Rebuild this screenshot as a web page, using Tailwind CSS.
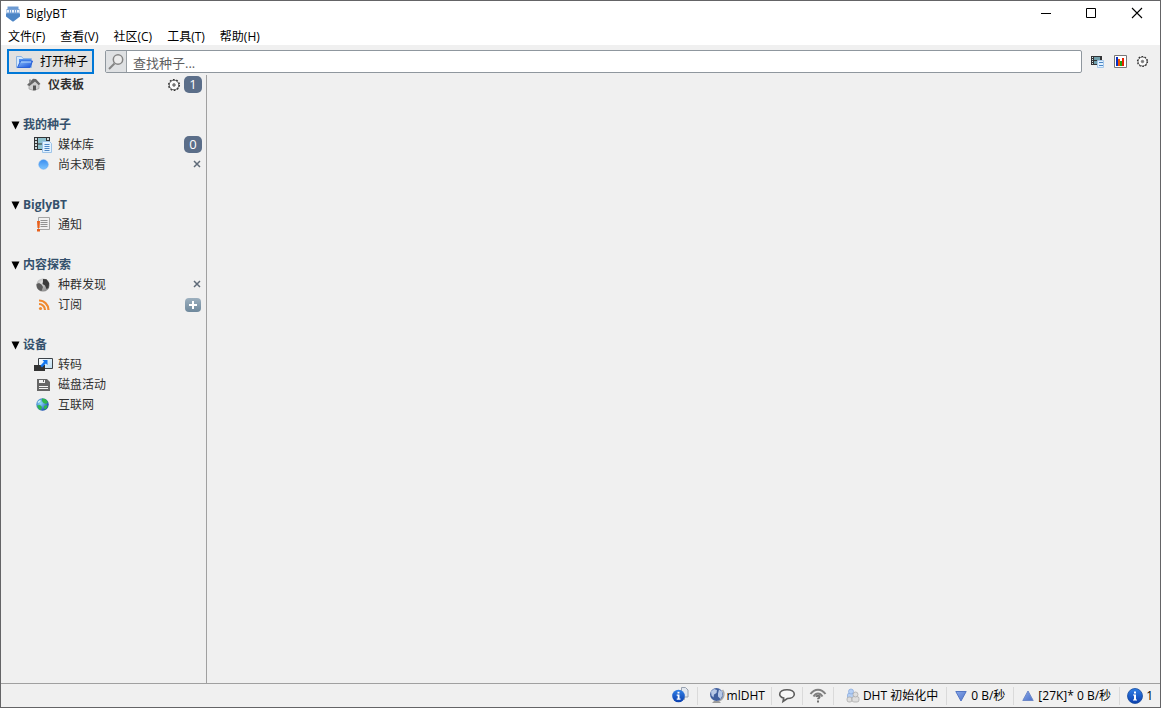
<!DOCTYPE html>
<html lang="zh-CN">

<head>
    <meta charset="UTF-8">
    <meta name="viewport" content="width=device-width, initial-scale=1.0">
    <title>BiglyBT</title>
    <script src="https://cdn.jsdelivr.net/npm/@tailwindcss/browser@4"></script>
    <style>
        body {
            font-family: "Open Sans", "Noto Sans CJK SC", sans-serif;
        }
    </style>
</head>

<body class="h-screen flex flex-col overflow-hidden border border-[#646466] bg-[#f0f0f0] text-xs text-black">

    <!-- Shared icons -->
    <svg class="absolute w-0 h-0" aria-hidden="true">
        <defs>
            <linearGradient id="blueBall" x1="0" y1="0" x2="0" y2="1">
                <stop offset="0" stop-color="#2f7fe6" />
                <stop offset="1" stop-color="#0b3fae" />
            </linearGradient>
            <linearGradient id="dotFill" x1="0" y1="0" x2="0" y2="1">
                <stop offset="0" stop-color="#3a8ef0" />
                <stop offset="1" stop-color="#7cc4ff" />
            </linearGradient>
            <linearGradient id="screenFill" x1="0" y1="0" x2="1" y2="1">
                <stop offset="0" stop-color="#ffffff" />
                <stop offset="1" stop-color="#b9dcf2" />
            </linearGradient>
            <linearGradient id="folderFill" x1="0" y1="0" x2="1" y2="1">
                <stop offset="0" stop-color="#8cc0fa" />
                <stop offset="1" stop-color="#1550dc" />
            </linearGradient>
            <linearGradient id="plusFill" x1="0" y1="0" x2="0" y2="1">
                <stop offset="0" stop-color="#9db0bf" />
                <stop offset="1" stop-color="#6e889c" />
            </linearGradient>
            <radialGradient id="greyBall" cx="0.4" cy="0.3" r="0.7">
                <stop offset="0" stop-color="#e4e4e4" />
                <stop offset="1" stop-color="#8c8c8c" />
            </radialGradient>
            <radialGradient id="seaBall" cx="0.35" cy="0.4" r="0.65">
                <stop offset="0" stop-color="#8cdcfa" />
                <stop offset="1" stop-color="#1b4fae" />
            </radialGradient>
            <linearGradient id="arrowFill" x1="0" y1="0" x2="1" y2="1">
                <stop offset="0" stop-color="#8aa9ea" />
                <stop offset="1" stop-color="#4a70c8" />
            </linearGradient>
            <symbol id="gear" viewBox="0 0 14 14">
                <circle cx="7" cy="7" r="4.8" fill="#fbfbfb" stroke="#555" stroke-width=".9" />
                <circle cx="7" cy="7" r="5.4" fill="none" stroke="#333" stroke-width="1.3" stroke-dasharray="1.7 1.69" />
                <circle cx="7" cy="7" r="1.4" fill="#777" stroke="#666" stroke-width=".6" />
            </symbol>
            <symbol id="library" viewBox="0 0 20 18">
                <path d="M1 1h16v13H1z" fill="#323436" />
                <path d="M5 2h8v5.500H5zM5 8.500h8V13H5z" fill="#8fc3cf" />
                <path d="M2 2h2v2H2zM2 5h2v2H2zM2 8h2v2H2zM2 11h2v2H2zM14 2h2v2h-2z" fill="#cfd8da" />
                <path d="M9.500 5.500h7l2 2v9h-9z" fill="#e3f2ff" stroke="#9fc4e8" />
                <path d="M11.500 8.500h5M11.500 10.500h5M11.500 12.500h5M11.500 14.500h5" stroke="#4d86c4" />
            </symbol>
            <symbol id="close" viewBox="0 0 8 8">
                <path d="M1 1l6 6M7 1L1 7" stroke="#5f6b78" stroke-width="1.500" />
            </symbol>
        </defs>
    </svg>

    <!-- Title bar -->
    <header class="h-[26px] shrink-0 flex items-center bg-white pl-1">
        <svg class="w-4 h-4" viewBox="0 0 16 16" aria-hidden="true">
            <path d="M2.500 .500h11v3h-11z" fill="#6c9ad2" />
            <path d="M1.500 3h13v5h-13z" fill="#79a3d8" />
            <path d="M2 4h2v2.500H2zM5 4h1v2.500H5zM7 4h2v2.500H7zM10 4h1v2.500h-1zM12 4h2v2.500h-2z" fill="#eaf1fa" />
            <path d="M1 7.500h14v3L8.500 15.500h-1L1 10.500z" fill="#4c85c6" />
        </svg>
        <h1 class="ml-[5px]">BiglyBT</h1>
        <div class="ml-auto flex self-stretch pb-[2px]">
            <button class="w-[45px] flex items-center justify-center" aria-label="最小化">
                <svg class="w-3 h-3" viewBox="0 0 12 12"><path d="M1 6.500h10" stroke="#000" /></svg>
            </button>
            <button class="w-[46px] flex items-center justify-center" aria-label="最大化">
                <svg class="w-3 h-3" viewBox="0 0 12 12"><path d="M1.500 1.500h9v9h-9z" fill="none" stroke="#000" /></svg>
            </button>
            <button class="w-[46px] flex items-center justify-center" aria-label="关闭">
                <svg class="w-3 h-3" viewBox="0 0 12 12"><path d="M1 1l10 10M11 1L1 11" stroke="#000" stroke-width="1.100" /></svg>
            </button>
        </div>
    </header>

    <!-- Menu -->
    <nav class="h-[18px] shrink-0 flex items-center gap-[15px] bg-white pt-[2px] pl-[7px]">
        <button>文件(F)</button>
        <button>查看(V)</button>
        <button>社区(C)</button>
        <button>工具(T)</button>
        <button>帮助(H)</button>
    </nav>

    <!-- Toolbar -->
    <div class="h-[30px] shrink-0 flex items-center pt-1 pb-px pl-[6px] pr-[11px]">
        <button class="w-[87px] h-[25px] shrink-0 flex items-center pl-[7px] gap-[6px] border-2 border-[#0078d7] bg-[#e1e1e1]">
            <svg class="w-[18px] h-4 shrink-0" viewBox="0 0 18 16" aria-hidden="true">
                <path d="M.500 13.500v-11h5l1.500 2h8.500v9z" fill="#d5e8fc" stroke="#8db4e2" />
                <path d="M3 5h12v3H3z" fill="#4e8ff0" />
                <path d="M1.500 13.500l3-6.500h12l-2.500 6.500z" fill="url(#folderFill)" stroke="#2a62d8" />
                <path d="M5 8h10" stroke="#b8dcff" />
            </svg>
            <span class="whitespace-nowrap">打开种子</span>
        </button>
        <div class="ml-[11px] h-[23px] flex-1 flex border border-[#8f979e] rounded-xs bg-white">
            <label for="search" class="w-[21px] flex items-center justify-center border-r border-[#9aa0a5] bg-[#dfe1e3]" aria-label="查找种子">
                <svg class="w-[18px] h-[18px]" viewBox="0 0 18 18" aria-hidden="true">
                    <circle cx="11" cy="6.500" r="4.700" fill="#ececec" stroke="#858585" stroke-width="1.500" />
                    <path d="M7.500 10.500L2 16" stroke="#858585" stroke-width="2" />
                </svg>
            </label>
            <input id="search" type="text" placeholder="查找种子..."
                class="flex-1 min-w-0 px-[6px] pt-1 text-[13px] outline-none placeholder:text-[#606060]">
        </div>
        <div class="ml-2 flex items-center gap-2">
            <button aria-label="媒体库">
                <svg class="w-4 h-[14px]" viewBox="0 0 16 14">
                    <path d="M1 1h11v9H1z" fill="#323436" />
                    <path d="M4 2h6v3H4zM4 6h6v3H4z" fill="#6f9eaa" />
                    <path d="M2 2h1v1H2zM2 4h1v1H2zM2 6h1v1H2zM2 8h1v1H2z" fill="#dfe6e8" />
                    <path d="M7.500 5.500h6v7h-6z" fill="#e3f2ff" stroke="#a5c8ea" />
                    <path d="M9 7.500h4M9 10.500h4" stroke="#4d86c4" />
                </svg>
            </button>
            <button aria-label="统计">
                <svg class="w-[13px] h-[13px]" viewBox="0 0 13 13">
                    <path d="M.500 .500h12v12H.500z" fill="#fff" stroke="#777" />
                    <path d="M2 2h2v9H2z" fill="#0a2ec0" />
                    <path d="M4 4h2v7H4z" fill="#f05000" />
                    <path d="M6 6h2v5H6z" fill="#20a010" />
                    <path d="M8 3h2v8H8z" fill="#e82000" />
                </svg>
            </button>
            <button class="ml-px" aria-label="设置"><svg class="w-[13px] h-[13px]"><use href="#gear" /></svg></button>
        </div>
    </div>

    <main class="flex-1 min-h-0 flex">

        <!-- Sidebar -->
        <aside class="w-[206px] shrink-0 border-r border-[#a0a0a0] pr-1 text-[#303030]">
            <div class="h-5 flex items-center pl-[26px]">
                <svg class="w-[14px] h-[14px]" viewBox="0 0 14 14" aria-hidden="true">
                    <path d="M2 7v4l5 1.500 5-2V6L8 3z" fill="#cfcfcf" stroke="#999" stroke-width=".700" />
                    <path d="M0 7L6 .800l3 .200 4.500 5-2 1L8 3.500 2.500 8z" fill="#666" />
                    <path d="M2 1.500h2V4L2 5.500z" fill="#999" />
                    <path d="M6 7.500h3v4.700H6z" fill="#555" />
                </svg>
                <a href="#" class="ml-[7px] font-bold">仪表板</a>
                <button class="ml-auto" aria-label="配置仪表板"><svg class="w-[14px] h-[14px]"><use href="#gear" /></svg></button>
                <span class="ml-[3px] mb-px w-[18px] h-[17px] rounded-[5px] bg-[#5b6e89] text-[13px] text-white text-center leading-[17px]">1</span>
            </div>

            <section class="mt-5">
                <h2 class="h-5 flex items-center gap-[3px] pl-[10px] font-bold text-[#34506c]">
                    <svg class="w-[9px] h-[9px]" viewBox="0 0 9 9" aria-hidden="true"><path d="M.500 .500h8L4.500 8.500z" fill="#000" /></svg>我的种子
                </h2>
                <div class="h-5 flex items-center pl-8">
                    <svg class="w-5 h-[18px]" aria-hidden="true"><use href="#library" /></svg>
                    <a href="#" class="ml-[5px]">媒体库</a>
                    <span class="ml-auto mb-px w-[18px] h-[17px] rounded-[5px] bg-[#5b6e89] text-[13px] text-white text-center leading-[17px]">0</span>
                </div>
                <div class="h-5 flex items-center pl-8">
                    <svg class="w-5 h-[18px]" viewBox="0 0 20 18" aria-hidden="true">
                        <circle cx="10.500" cy="8.500" r="4.700" fill="url(#dotFill)" stroke="#5ba3ef" stroke-width=".600" />
                    </svg>
                    <a href="#" class="ml-[5px]">尚未观看</a>
                    <button class="ml-auto mr-px mb-[2px]" aria-label="关闭尚未观看"><svg class="w-2 h-2"><use href="#close" /></svg></button>
                </div>
            </section>

            <section class="mt-5">
                <h2 class="h-5 flex items-center gap-[3px] pl-[10px] font-bold text-[#34506c]">
                    <svg class="w-[9px] h-[9px]" viewBox="0 0 9 9" aria-hidden="true"><path d="M.500 .500h8L4.500 8.500z" fill="#000" /></svg>BiglyBT
                </h2>
                <div class="h-5 flex items-center pl-8">
                    <svg class="w-5 h-[18px]" viewBox="0 0 20 18" aria-hidden="true">
                        <path d="M5.500 1.500h11v12h-11z" fill="#f0f0f0" stroke="#a5a5a5" />
                        <path d="M7.500 4.500h7M7.500 6.500h7M7.500 8.500h7M7.500 10.500h7" stroke="#929292" />
                        <path d="M4 5h3l-.500 7h-2zM4 13h3v2.500H4z" fill="#e8601c" />
                    </svg>
                    <a href="#" class="ml-[5px]">通知</a>
                </div>
            </section>

            <section class="mt-5">
                <h2 class="h-5 flex items-center gap-[3px] pl-[10px] font-bold text-[#34506c]">
                    <svg class="w-[9px] h-[9px]" viewBox="0 0 9 9" aria-hidden="true"><path d="M.500 .500h8L4.500 8.500z" fill="#000" /></svg>内容探索
                </h2>
                <div class="h-5 flex items-center pl-8">
                    <svg class="w-5 h-[18px]" viewBox="0 0 20 18" aria-hidden="true">
                        <circle cx="10" cy="9" r="6.600" fill="url(#greyBall)" />
                        <path d="M3.600 8l2.400-1 2.500 1.500 1.500 2.500-1.500 4C5.500 14.500 3.500 12 3.500 9z" fill="#5c5c5c" />
                        <path d="M10 3l3.500 .300 2.700 4L15.500 12l-2 1-1.500-3.500-2.500-1.500.500-2.500z" fill="#3c3c3c" />
                    </svg>
                    <a href="#" class="ml-[5px]">种群发现</a>
                    <button class="ml-auto mr-px mb-[2px]" aria-label="关闭种群发现"><svg class="w-2 h-2"><use href="#close" /></svg></button>
                </div>
                <div class="h-5 flex items-center pl-8">
                    <svg class="w-5 h-[18px]" viewBox="0 0 20 18" fill="none" stroke="#f08a30" stroke-width="2.200" aria-hidden="true">
                        <path d="M6 8a6 6 0 0 1 6 6M6 4.500a9.500 9.500 0 0 1 9.500 9.500" />
                        <circle cx="7.500" cy="12.500" r="1.600" fill="#f08a30" stroke="none" />
                    </svg>
                    <a href="#" class="ml-[5px]">订阅</a>
                    <button class="ml-auto mr-px" aria-label="添加订阅">
                        <svg class="w-4 h-[14px]" viewBox="0 0 16 14">
                            <rect width="16" height="14" rx="4" fill="url(#plusFill)" />
                            <path d="M8 3v8M4 7h8" stroke="#fff" stroke-width="2" />
                        </svg>
                    </button>
                </div>
            </section>

            <section class="mt-5">
                <h2 class="h-5 flex items-center gap-[3px] pl-[10px] font-bold text-[#34506c]">
                    <svg class="w-[9px] h-[9px]" viewBox="0 0 9 9" aria-hidden="true"><path d="M.500 .500h8L4.500 8.500z" fill="#000" /></svg>设备
                </h2>
                <div class="h-5 flex items-center pl-8">
                    <svg class="w-5 h-[18px]" viewBox="0 0 20 18" aria-hidden="true">
                        <path d="M5.500 2.500h14v10h-14z" fill="url(#screenFill)" stroke="#3c4248" />
                        <path d="M1 9h11v6H1z" fill="#333" />
                        <path d="M9.500 4h5v5l-1.700-1.500L9 11.500 7.300 9.800 11 5.700z" fill="#1277f0" />
                    </svg>
                    <a href="#" class="ml-[5px]">转码</a>
                </div>
                <div class="h-5 flex items-center pl-8">
                    <svg class="w-5 h-[18px]" viewBox="0 0 20 18" aria-hidden="true">
                        <path d="M4 3h10l3 3v9H4z" fill="#666" />
                        <path d="M6 4h6v3H6zM6 10h9v1H6zM6 12h9v1H6z" fill="#f2f2f2" />
                        <path d="M10 4h1v2h-1z" fill="#666" />
                    </svg>
                    <a href="#" class="ml-[5px]">磁盘活动</a>
                </div>
                <div class="h-5 flex items-center pl-8">
                    <svg class="w-5 h-[18px]" viewBox="0 0 20 18" aria-hidden="true">
                        <circle cx="9.500" cy="8.500" r="6.200" fill="url(#seaBall)" />
                        <path d="M9 2.500l3.500 .500 2.500 3-2 2-2.500-1L9 5zM4 9.500l3-.500 2 2-1 3-2-.500zM11 10l3-1 .500 2-2 2.500-1.500-1z" fill="#30b84c" />
                        <path d="M5 6.500l2.500-2" stroke="#d8f6fa" stroke-width="1.500" />
                    </svg>
                    <a href="#" class="ml-[5px]">互联网</a>
                </div>
            </section>
        </aside>

        <div class="flex-1"></div>
    </main>

    <!-- Status bar -->
    <footer class="h-6 shrink-0 flex items-center justify-end border-t border-[#a0a0a0] pr-[7px] whitespace-nowrap">
        <button class="pr-2" aria-label="信息">
            <svg class="w-[17px] h-[17px]" viewBox="0 0 17 17">
                <path d="M6.500 3.500h6v9h-6z" fill="#dfe5ec" stroke="#a0a8b2" />
                <path d="M9.500 .500h4l2.500 2.500v7H9.500z" fill="#e2e7ee" stroke="#98a2b0" />
                <circle cx="6.500" cy="9" r="6.300" fill="url(#blueBall)" />
                <path d="M5.500 4.700h2v1.800h-2zM4.700 7.500h2.800v4h1v1.200H4.700v-1.200h1V8.700h-1z" fill="#fff" />
            </svg>
        </button>
        <div class="h-[18px] flex items-center gap-[2px] border-l border-[#dadada] pl-[11px] pr-[6px]">
            <svg class="w-4 h-[18px]" viewBox="0 0 16 18" aria-hidden="true">
                <path d="M5 14h5l2 2H3z" fill="#9a9a9a" />
                <path d="M13.500 3a7 7 0 0 1-4 11" fill="none" stroke="#aaa" stroke-width="1.500" />
                <circle cx="7.500" cy="7.500" r="6.500" fill="#405f9e" />
                <path d="M2 4.500L5 2l3 1-.500 3L5 7.500l-.500 3-2-2zM10 2.500l3 2 .500 4-2 3.500L9 9.500v-3z" fill="#b7c8e6" />
            </svg>
            <span>mlDHT</span>
        </div>
        <button class="h-[18px] flex items-center border-l border-[#dadada] px-[6px]" aria-label="聊天">
            <svg class="w-[18px] h-4" viewBox="0 0 18 16">
                <path d="M9 1.800c4.300 0 7.300 1.800 7.300 4.400s-3 4.300-7 4.300L5 13.500l.700-3.400C3.200 9.400 1.700 7.900 1.700 6.200c0-2.600 3-4.400 7.300-4.400z" fill="#f7f7f7" stroke="#5c5c5c" stroke-width="1.600" />
            </svg>
        </button>
        <button class="h-[18px] flex items-center border-l border-[#dadada] px-[6px]" aria-label="网络">
            <svg class="w-[18px] h-4" viewBox="0 0 18 16" fill="none" stroke="#808080" stroke-width="2">
                <path d="M1.500 6C5.500 .300 12.500 .300 16.500 6M4.500 8.500c2.500-4 6.500-4 9 0" />
                <path d="M7.300 9c.500-2 3.700-1.500 3.200.300-.300 1-1.500 1-1.500 1.900M9 12.500v2" stroke="#707070" />
            </svg>
        </button>
        <div class="h-[18px] flex items-center gap-[3px] border-l border-[#dadada] pl-3 pr-2">
            <svg class="w-[14px] h-4" viewBox="0 0 14 16" aria-hidden="true">
                <g fill="#b5cff4" stroke="#85a8dc" stroke-width=".700"><rect x="1.500" y="5" width="7" height="6" rx="2" /><circle cx="5" cy="3.500" r="2.500" /></g>
                <g fill="#dedede" stroke="#a5a5a5" stroke-width=".700"><rect x="1" y="9" width="5" height="5" rx="2" /><rect x="6" y="8.500" width="7" height="5.500" rx="2" /><circle cx="9.500" cy="6.500" r="2.500" /></g>
            </svg>
            <span>DHT 初始化中</span>
        </div>
        <div class="h-[18px] flex items-center gap-1 border-l border-[#dadada] pl-2 pr-2">
            <svg class="w-3 h-3" viewBox="0 0 12 12" aria-hidden="true"><path d="M.800 1.500h10.400L6 11z" fill="url(#arrowFill)" stroke="#5276c4" /></svg>
            <span>0 B/秒</span>
        </div>
        <div class="h-[18px] flex items-center gap-1 border-l border-[#dadada] pl-2 pr-2">
            <svg class="w-3 h-3" viewBox="0 0 12 12" aria-hidden="true"><path d="M.800 10.500h10.400L6 1z" fill="url(#arrowFill)" stroke="#6d88c8" /></svg>
            <span>[27K]* 0 B/秒</span>
        </div>
        <button class="h-[18px] flex items-center gap-[3px] border-l border-[#dadada] pl-[7px]">
            <svg class="w-4 h-4" viewBox="0 0 16 16" aria-hidden="true">
                <circle cx="8" cy="8" r="7.500" fill="url(#blueBall)" stroke="#174a9c" stroke-width=".800" />
                <path d="M7 3.500h2v2H7zM6 6.500h3v5h1v1H6v-1h1v-4H6z" fill="#fff" />
            </svg>
            <span>1</span>
        </button>
    </footer>

</body>

</html>
